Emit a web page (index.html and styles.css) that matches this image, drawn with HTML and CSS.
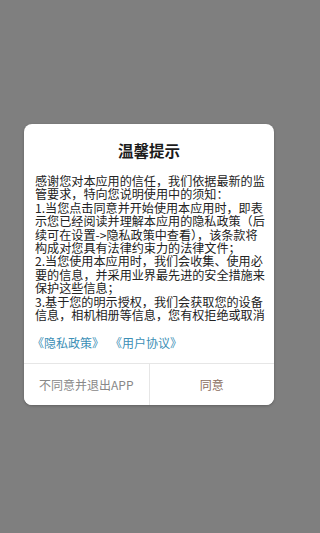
FILE: index.html
```html
<!DOCTYPE html>
<html lang="zh-CN">
<head>
<meta charset="utf-8">
<meta name="viewport" content="width=device-width, initial-scale=1">
<title>温馨提示</title>
<link rel="stylesheet" href="styles.css">
</head>
<body>
<div class="screen">
  <div class="dialog">
    <h1 class="title">温馨提示</h1>
    <div class="content">
      <p class="text">感谢您对本应用的信任，我们依据最新的监<br>管要求，特向您说明使用中的须知：<br>1.当您点击同意并开始使用本应用时，即表<br>示您已经阅读并理解本应用的隐私政策（后<br>续可在设置-&gt;隐私政策中查看），该条款将<br>构成对您具有法律约束力的法律文件；<br>2.当您使用本应用时，我们会收集、使用必<br>要的信息，并采用业界最先进的安全措施来<br>保护这些信息；<br>3.基于您的明示授权，我们会获取您的设备<br>信息，相机相册等信息，您有权拒绝或取消</p>
    </div>
    <div class="links">
      <a class="link" href="#">《隐私政策》</a>
      <a class="link" href="#">《用户协议》</a>
    </div>
    <div class="actions">
      <button class="btn btn-cancel" type="button">不同意并退出APP</button>
      <button class="btn btn-ok" type="button">同意</button>
    </div>
  </div>
</div>
</body>
</html>
```

FILE: styles.css
```css
html, body {
  margin: 0;
  padding: 0;
  background: #7f7f7f;
}

body {
  font-family: "Noto Sans CJK SC", "Noto Sans", sans-serif;
  width: 300px;
  height: 533px;
  overflow: hidden;
}

.screen {
  padding-top: 124px;
  padding-left: 24px;
}

.dialog {
  width: 250px;
  background: #ffffff;
  border-radius: 8px;
  box-shadow: 0 1px 3px rgba(0, 0, 0, 0.25);
  overflow: hidden;
}

.title {
  margin: 0;
  padding-top: 16px;
  font-size: 15.5px;
  line-height: 20px;
  font-weight: bold;
  color: #1c1c1c;
  text-align: center;
}

.content {
  margin-top: 14px;
  padding: 0 8px 0 11px;
}

.text {
  margin: 0;
  font-size: 12.1px;
  line-height: 13.4px;
  color: #222222;
  white-space: nowrap;
}

.links {
  display: flex;
  gap: 6px;
  padding: 14px 0 0 8px;
  height: 16px;
  margin-bottom: 12px;
}

.link {
  font-size: 12px;
  line-height: 16px;
  color: #3b8fb6;
  text-decoration: none;
}

.actions {
  display: flex;
  border-top: 1px solid #e6e6e6;
  height: 41px;
}

.btn {
  flex: 1;
  margin: 0;
  padding: 0;
  border: none;
  background: #ffffff;
  font-family: inherit;
  font-size: 12px;
  line-height: 41px;
}

.btn-cancel {
  color: #888888;
  border-right: 1px solid #e6e6e6;
}

.btn-ok {
  color: #8a6d5e;
}
```
